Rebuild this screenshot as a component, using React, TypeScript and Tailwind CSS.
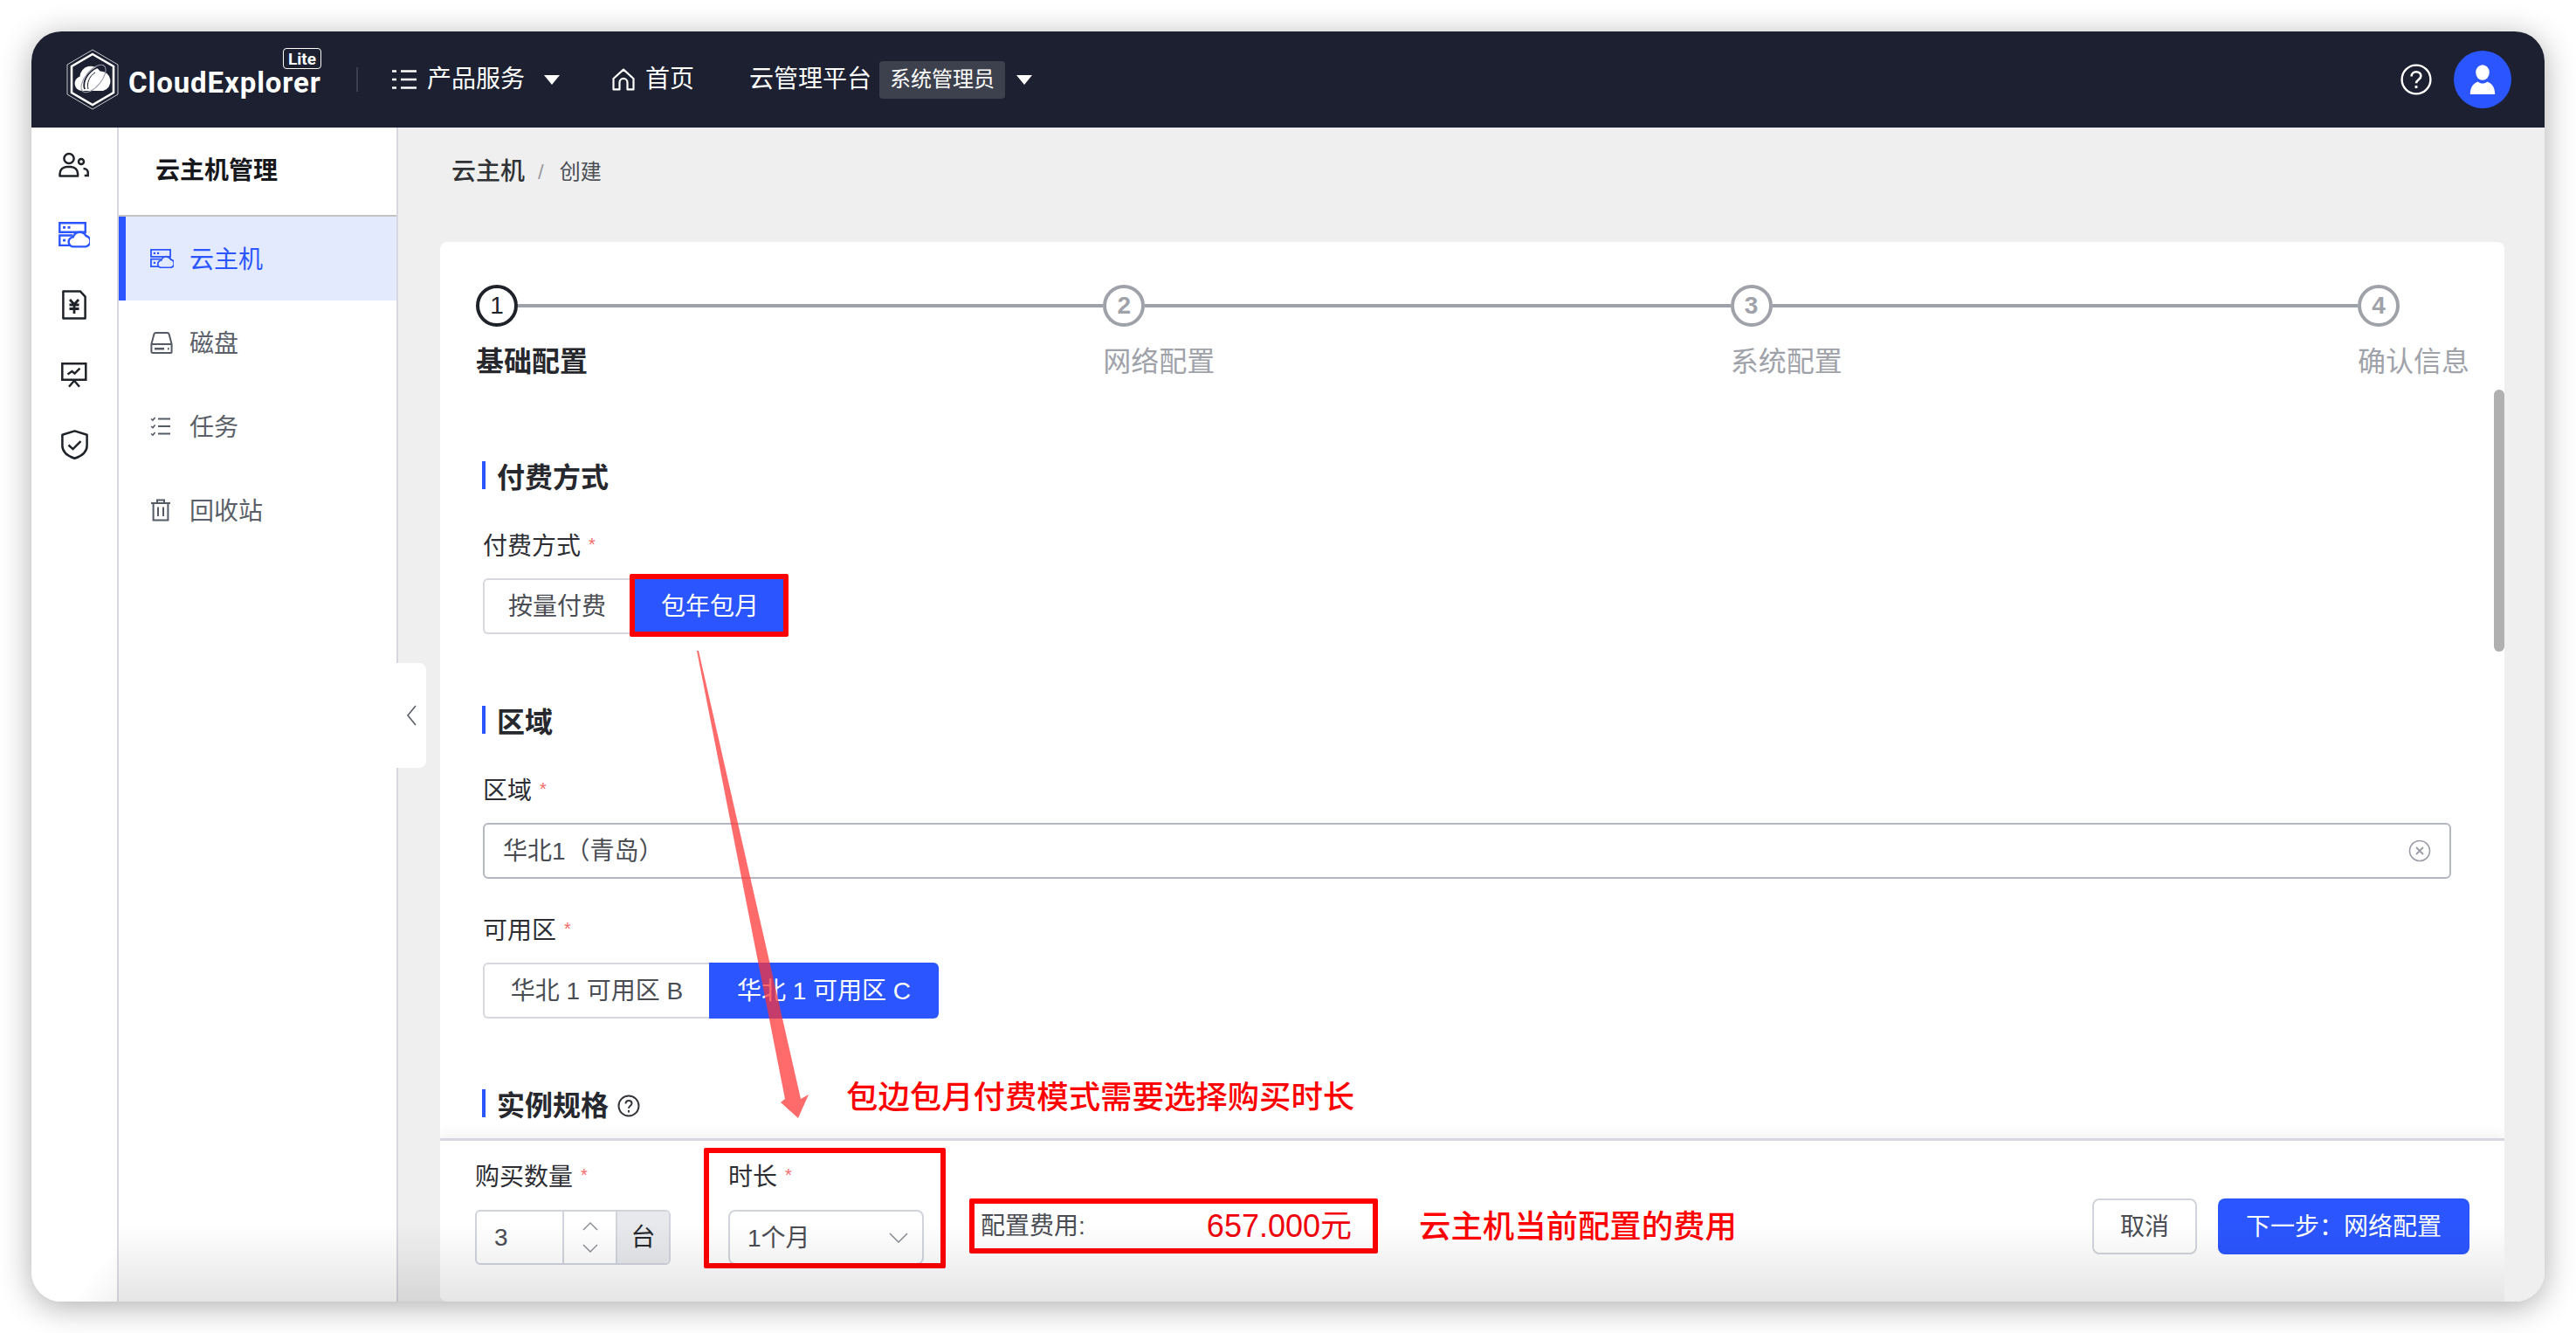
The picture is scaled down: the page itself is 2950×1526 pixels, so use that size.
import React from "react";

const FONT = '"Liberation Sans","Noto Sans CJK SC",sans-serif';

function Logo() {
  return (
    <svg width="60" height="70" viewBox="0 0 60 70" className="shrink-0">
      <polygon points="30,1 59,18 59,52 30,69 1,52 1,18" fill="none" stroke="#ffffff" strokeWidth="1" opacity="0.75" />
      <polygon points="30,6 54,20 54,50 30,64 6,50 6,20" fill="none" stroke="#ffffff" strokeWidth="2.6" />
      <path d="M18 48a8.500 8.500 0 0 1-2.500-16.600a12.500 12.500 0 0 1 23-6a11.500 11.500 0 0 1 3.500 22.600z" fill="#ffffff" />
      <path d="M21 46C18 38 24 26 36 21" fill="none" stroke="#1c2030" strokeWidth="1.800" />
      <path d="M25 46C23 40 26 31 33 27" fill="none" stroke="#1c2030" strokeWidth="1" />
      <ellipse cx="31" cy="34" rx="9" ry="19" transform="rotate(40 31 34)" fill="none" stroke="#9a9ca6" strokeWidth="1.100" />
    </svg>
  );
}

function ServerCloud({ size, color, fill }: { size: number; color: string; fill: string }) {
  return (
    <svg width={size} height={size * 0.83} viewBox="0 0 36 30" fill="none" stroke={color} strokeWidth="2.400">
      <path d="M1.200 1.200h29.600v10.600H1.200z" />
      <path d="M14 27H1.200V15.500H16" />
      <path d="M5 6.500h3M10.500 6.500h3M5 21.200h3" strokeWidth="2.800" />
      <path d="M17.500 28.500a5.500 5.500 0 0 1-.8-11a8 8 0 0 1 14.800-1.400a6.300 6.300 0 0 1-.5 12.400z" fill={fill} />
    </svg>
  );
}

function Users() {
  return (
    <svg width="36" height="30" viewBox="0 0 36 30" fill="none" stroke="#1f2329" strokeWidth="2.500">
      <circle cx="12" cy="7.500" r="5.600" />
      <path d="M1.500 27.500v-2.600c0-4.600 3.800-8 8-8h4.600c4.400 0 8 3.400 8 8v2.600z" strokeLinejoin="round" />
      <circle cx="26" cy="11" r="3" />
      <path d="M28.500 19c3.400 0 5.200 2.200 5.200 4.600v3.400h-4" />
    </svg>
  );
}

function DocYen() {
  return (
    <svg width="28" height="34" viewBox="0 0 28 34" fill="none" stroke="#1f2329" strokeWidth="2.500">
      <path d="M1.400 1.400h19.400l5.800 6.200v25H1.400z" strokeLinejoin="round" />
      <path d="M9 11l5 5.400L19 11M8.500 17h11M8.500 21.500h11M14 16.400V27" strokeWidth="2.800" />
    </svg>
  );
}

function Board() {
  return (
    <svg width="30" height="29" viewBox="0 0 30 29" fill="none" stroke="#1f2329" strokeWidth="2.500">
      <path d="M1.300 1.300h27v18.400h-27z" />
      <path d="M7.500 13.500l5-3.500 3 2.600 6-6" />
      <path d="M9 27.800l6-7 6 7" />
    </svg>
  );
}

function Shield() {
  return (
    <svg width="31" height="34" viewBox="0 0 31 34" fill="none" stroke="#1f2329" strokeWidth="2.500">
      <path d="M15.500 1.400L29.600 5.800v12.400c0 7.400-6 11.800-14.100 14.600C7.400 30 1.400 25.600 1.400 18.200V5.800z" strokeLinejoin="round" />
      <path d="M8.500 17.500l5 4.600 9-9" />
    </svg>
  );
}

function Disk() {
  return (
    <svg width="26" height="25" viewBox="0 0 26 25" fill="none" stroke="#555b66" strokeWidth="2">
      <path d="M1.400 14L4.400 2.600C4.700 1.600 5.400 1 6.400 1h13.200c1 0 1.700.6 2 1.600L24.600 14v8.400c0 .9-.7 1.600-1.600 1.600H3c-.9 0-1.600-.7-1.600-1.600z" />
      <path d="M1.400 14h23.200" />
      <path d="M5 19.200h11M20 19.200h1.600" strokeWidth="2.400" />
    </svg>
  );
}

function Tasks() {
  return (
    <svg width="24" height="24" viewBox="0 0 24 24" fill="none" stroke="#555b66" strokeWidth="2">
      <path d="M9 3.500h14M9 12h14M9 20.500h14" />
      <path d="M1 3.500l2 1.600L5.600 2M1 12l2 1.600 2.600-3.100M1 20.500l2 1.600 2.600-3.100" strokeWidth="1.600" />
    </svg>
  );
}

function Trash() {
  return (
    <svg width="24" height="26" viewBox="0 0 24 26" fill="none" stroke="#555b66" strokeWidth="2">
      <path d="M1 5h22M8 5V1.400h8V5" />
      <path d="M3.600 5v19.600h16.800V5" />
      <path d="M9 9.500v10.500M15 9.500v10.500" />
    </svg>
  );
}

function Req() {
  return <span className="ml-[9px] text-[20px] leading-none text-[#f56c6c] relative -top-[3px]">*</span>;
}

function SectionTitle({ children }: { children: React.ReactNode }) {
  return (
    <div className="flex items-center gap-[13px] h-[32px] text-[32px] leading-[32px] font-semibold text-[#26282d]">
      <span className="w-[4px] h-[32px] bg-[#2b56ff]" />
      <span className="relative top-[3px] flex items-center gap-[10px]">{children}</span>
    </div>
  );
}

function Label({ children }: { children: React.ReactNode }) {
  return (
    <div className="relative top-[3px] flex items-center h-[28px] text-[28px] leading-[28px] text-[#2c2e33]">
      {children}
      <Req />
    </div>
  );
}

function Step({ n, label, active, last }: { n: number; label: string; active?: boolean; last?: boolean }) {
  return (
    <div className={last ? "w-[126px] shrink-0" : "flex-1"}>
      <div className="flex items-center">
        <div
          className={
            active
              ? "w-[48px] h-[48px] shrink-0 rounded-full border-[4px] border-[#1f2329] flex items-center justify-center text-[28px] font-medium text-[#1f2329]"
              : "w-[48px] h-[48px] shrink-0 rounded-full border-[4px] border-[#a0a2aa] flex items-center justify-center text-[28px] font-bold text-[#a0a2aa]"
          }
        >
          {n}
        </div>
        {!last && <div className="flex-1 h-[4px] bg-[#9ea1a9]" />}
      </div>
      <div
        className={
          active
            ? "mt-[18px] h-[42px] text-[32px] leading-[44px] font-semibold text-[#26282d] whitespace-nowrap"
            : "mt-[18px] h-[42px] text-[32px] leading-[44px] text-[#a0a2aa] whitespace-nowrap"
        }
      >
        {label}
      </div>
    </div>
  );
}

function NavItem({ icon, label, active }: { icon: React.ReactNode; label: string; active?: boolean }) {
  return (
    <div
      className={
        active
          ? "flex items-center h-[96px] bg-[#e4eafd] border-l-[8px] border-[#2b56ff] text-[#2b56ff] text-[28px]"
          : "flex items-center h-[96px] border-l-[8px] border-transparent text-[#5a5f69] text-[28px]"
      }
    >
      <span className="w-[73px] pl-[28px] flex items-center shrink-0">{icon}</span>
      <span className="pt-[3px]">{label}</span>
    </div>
  );
}

export default function App() {
  return (
    <div className="relative w-[2950px] h-[1526px] bg-white p-[36px] overflow-hidden" style={{ fontFamily: FONT }}>
      <div className="relative w-[2878px] h-[1454px] rounded-[34px] overflow-hidden flex flex-col bg-white shadow-[0_6px_36px_rgba(0,0,0,0.32)]">
        {/* top bar */}
        <header className="h-[110px] shrink-0 bg-[#1c2030] flex items-center text-white pl-[40px] pr-[38px]">
          <Logo />
          <div className="relative ml-[11px] w-[220px] h-[70px] flex items-center pt-[6px]">
            <span className="text-[33px] leading-none font-bold tracking-[0.9px] whitespace-nowrap" style={{ fontFamily: '"Roboto",sans-serif' }}>
              CloudExplorer
            </span>
            <span
              className="absolute -top-[1px] -right-[1px] w-[44px] h-[24px] rounded-[4px] border border-white flex items-center justify-center text-[19px] leading-none font-bold"
              style={{ fontFamily: '"Roboto",sans-serif' }}
            >
              Lite
            </span>
          </div>
          <div className="ml-[41px] w-[2px] h-[28px] bg-[#3a3f4e]" />
          <svg className="ml-[39px] shrink-0" width="28" height="24" viewBox="0 0 28 24" fill="none" stroke="#fff" strokeWidth="2.400">
            <path d="M0 2.500h5M10 2.500h18M0 12h5M10 12h18M0 21.500h5M10 21.500h18" />
          </svg>
          <span className="ml-[12px] text-[28px] leading-none">产品服务</span>
          <svg className="ml-[22px] shrink-0" width="18" height="11" viewBox="0 0 18 11"><path d="M0 0h18L9 11z" fill="#fff" /></svg>
          <svg className="ml-[60px] shrink-0" width="26" height="26" viewBox="0 0 26 26" fill="none" stroke="#fff" strokeWidth="2.200" strokeLinejoin="round">
            <path d="M1.500 12L13 1.600 24.500 12v12.400H17.500v-8a4.500 4.500 0 0 0-9 0v8H1.500z" />
          </svg>
          <span className="ml-[12px] text-[28px] leading-none">首页</span>
          <span className="ml-[63px] text-[28px] leading-none">云管理平台</span>
          <span className="ml-[9px] w-[144px] h-[43px] rounded-[4px] bg-[#3d414e] flex items-center justify-center text-[24px] leading-none">系统管理员</span>
          <svg className="ml-[13px] shrink-0" width="18" height="11" viewBox="0 0 18 11"><path d="M0 0h18L9 11z" fill="#fff" /></svg>
          <svg className="ml-auto shrink-0" width="36" height="36" viewBox="0 0 36 36" fill="none" stroke="#fff">
            <circle cx="18" cy="18" r="16.400" strokeWidth="2.400" />
            <path d="M12.600 14.400c0-3.200 2.400-5.200 5.400-5.200s5.400 2 5.400 4.800c0 4-5.400 4.400-5.400 8.200" strokeWidth="2.600" />
            <path d="M18 25v3" strokeWidth="2.800" />
          </svg>
          <div className="ml-[25px] w-[66px] h-[66px] rounded-full bg-[#2b56ff] flex items-center justify-center">
            <svg width="30" height="34" viewBox="0 0 30 34" fill="#fff">
              <ellipse cx="15" cy="9" rx="7.800" ry="8.800" />
              <path d="M0.800 34c0-7 2.500-12.600 9-14.600 1.500 1.400 3.200 2 5.200 2s3.700-.6 5.200-2c6.500 2 9 7.600 9 14.600z" />
            </svg>
          </div>
        </header>

        <div className="flex-1 flex min-h-0">
          {/* icon rail */}
          <aside className="w-[100px] shrink-0 border-r-2 border-[#d6d7df] bg-white flex flex-col items-center pt-[3px]">
            {[<Users key="a" />, <ServerCloud key="b" size={36} color="#2b56ff" fill="#ffffff" />, <DocYen key="c" />, <Board key="d" />, <Shield key="e" />].map((ic, i) => (
              <div key={i} className="h-[80px] w-full shrink-0 flex items-center justify-center">
                {ic}
              </div>
            ))}
          </aside>

          {/* secondary nav */}
          <nav className="relative w-[320px] shrink-0 border-r-2 border-[#d6d7df] bg-white">
            <div className="h-[102px] border-b-2 border-[#c4c4c4] pl-[42px] flex items-center text-[28px] font-semibold text-[#17181c]">云主机管理</div>
            <NavItem active icon={<ServerCloud size={27} color="#2b56ff" fill="#e4eafd" />} label="云主机" />
            <NavItem icon={<Disk />} label="磁盘" />
            <NavItem icon={<Tasks />} label="任务" />
            <NavItem icon={<Trash />} label="回收站" />
            <div className="absolute left-[318px] top-[613px] w-[34px] h-[120px] bg-white rounded-r-[8px] flex items-center justify-center z-10">
              <svg width="12" height="24" viewBox="0 0 12 24" fill="none" stroke="#5a5f69" strokeWidth="1.600"><path d="M11 1L2 12l9 11" /></svg>
            </div>
          </nav>

          {/* main */}
          <main className="flex-1 min-w-0 flex flex-col bg-[#efefef] pl-[48px] pr-[46px]">
            <div className="h-[131px] shrink-0 pt-[37px] pl-[13px] flex items-start text-[#303236]">
              <span className="text-[28px] leading-[28px] font-medium">云主机</span>
              <span className="ml-[15px] text-[24px] leading-[28px] text-[#9a9ca3]">/</span>
              <span className="ml-[18px] text-[24px] leading-[28px] text-[#4b4e55]">创建</span>
            </div>

            <section className="relative flex-1 min-h-0 bg-white rounded-t-[8px] rounded-bl-[8px] overflow-hidden flex flex-col">
              <div className="relative flex-1 min-h-0 overflow-hidden">
                <div className="absolute right-0 top-[169px] w-[12px] h-[300px] rounded-full bg-[#b0b0b0]" />
                <div className="flex pl-[41px] pr-[42px] pt-[49px]">
                  <Step n={1} label="基础配置" active />
                  <Step n={2} label="网络配置" />
                  <Step n={3} label="系统配置" />
                  <Step n={4} label="确认信息" last />
                </div>

                <div className="pl-[48px] pr-[61px]">
                  <div className="mt-[94px]"><SectionTitle>付费方式</SectionTitle></div>
                  <div className="mt-[49px] ml-[1px]"><Label>付费方式</Label></div>
                  <div className="mt-[25px] ml-[1px] flex h-[64px] text-[28px]">
                    <div className="w-[168px] pt-[2px] border-2 border-r-0 border-[#d6d7df] rounded-l-[6px] flex items-center justify-center text-[#4a4d54]">按量付费</div>
                    <div className="relative w-[182px] pt-[2px] pl-[2px] bg-[#2b56ff] text-white flex items-center justify-center">
                      包年包月
                      <div className="absolute left-0 right-0 -top-[5px] -bottom-[3px] border-[6px] border-[#ff0000] rounded-[2px]" />
                    </div>
                  </div>

                  <div className="mt-[82px]"><SectionTitle>区域</SectionTitle></div>
                  <div className="mt-[49px] ml-[1px]"><Label>区域</Label></div>
                  <div className="mt-[25px] ml-[1px] h-[64px] border-2 border-[#b4b6c0] rounded-[6px] flex items-center pl-[21px] pr-[21px] text-[28px] text-[#4a4d54] justify-between">
                    <span className="pt-[2px]">华北1（青岛）</span>
                    <svg width="26" height="26" viewBox="0 0 26 26" fill="none" stroke="#9a9ca6" strokeWidth="1.600">
                      <circle cx="13" cy="13" r="11.500" />
                      <path d="M9 9l8 8M17 9l-8 8" strokeWidth="1.800" />
                    </svg>
                  </div>

                  <div className="mt-[43px] ml-[1px]"><Label>可用区</Label></div>
                  <div className="mt-[25px] ml-[1px] flex h-[64px] text-[28px]">
                    <div className="w-[259px] pt-[2px] border-2 border-r-0 border-[#d6d7df] rounded-l-[6px] flex items-center justify-center text-[#4a4d54]">华北 1 可用区 B</div>
                    <div className="w-[263px] pt-[2px] bg-[#2b56ff] text-white rounded-r-[6px] flex items-center justify-center">华北 1 可用区 C</div>
                  </div>

                  <div className="mt-[81px]">
                    <SectionTitle>
                      实例规格
                      <svg width="26" height="26" viewBox="0 0 26 26" fill="none" stroke="#33353a" strokeWidth="2">
                        <circle cx="13" cy="13" r="11.500" />
                        <path d="M9.500 10.500c0-2.200 1.600-3.500 3.500-3.500s3.500 1.300 3.500 3.200c0 2.700-3.500 3-3.500 5.500" />
                        <path d="M13 18v2.500" />
                      </svg>
                    </SectionTitle>
                  </div>
                </div>
              </div>

              {/* footer */}
              <div className="h-[187px] shrink-0 bg-white border-t-[3px] border-[#d6d7e0] shadow-[0_-6px_12px_rgba(0,0,0,0.05)] flex items-start pl-[40px] pr-[40px] pt-[25px]">
                <div className="w-[224px] shrink-0">
                  <Label>购买数量</Label>
                  <div className="mt-[26px] h-[63px] flex border-2 border-[#d2d4dd] rounded-[6px] overflow-hidden text-[28px] text-[#4a4d54]">
                    <div className="w-[98px] pl-[20px] flex items-center">3</div>
                    <div className="w-[63px] border-x-2 border-[#d2d4dd] flex flex-col items-center justify-center gap-[15px]">
                      <svg width="18" height="10" viewBox="0 0 18 10" fill="none" stroke="#8a8c94" strokeWidth="1.400"><path d="M1 9l8-8 8 8" /></svg>
                      <svg width="18" height="10" viewBox="0 0 18 10" fill="none" stroke="#8a8c94" strokeWidth="1.400"><path d="M1 1l8 8 8-8" /></svg>
                    </div>
                    <div className="flex-1 bg-[#e8e9ec] flex items-center justify-center text-[#26282d]">台</div>
                  </div>
                </div>

                <div className="relative ml-[66px] w-[224px] shrink-0">
                  <Label>时长</Label>
                  <div className="mt-[26px] h-[63px] flex items-center justify-between border-2 border-[#d2d4dd] rounded-[8px] pl-[20px] pr-[16px] text-[28px] text-[#4a4d54]">
                    <span className="pt-[2px]">1个月</span>
                    <svg width="22" height="12" viewBox="0 0 22 12" fill="none" stroke="#8a8c94" strokeWidth="1.500"><path d="M1 1l10 10L21 1" /></svg>
                  </div>
                  <div className="absolute -left-[28px] -right-[25px] -top-[17px] -bottom-[4px] border-[6px] border-[#ff0000] rounded-[2px]" />
                </div>

                <div className="ml-[52px] mt-[41px] w-[468px] h-[63px] shrink-0 border-[6px] border-[#ff0000] rounded-[2px] flex items-center justify-between pl-[7px] pr-[24px]">
                  <span className="text-[28px] text-[#4a4d54] pt-[1px]">配置费用:</span>
                  <span className="text-[36px] text-[#f0000a]">657.000元</span>
                </div>

                <div className="ml-[47px] mt-[41px] h-[63px] pt-[3px] flex items-center text-[36.4px] font-medium text-[#ff0000] whitespace-nowrap">云主机当前配置的费用</div>

                <div className="ml-auto mt-[41px] flex gap-[24px] text-[28px]">
                  <div className="w-[120px] h-[64px] pt-[2px] border-2 border-[#d2d4dd] rounded-[8px] flex items-center justify-center text-[#4a4d54]">取消</div>
                  <div className="w-[288px] h-[64px] pt-[2px] bg-[#2b56ff] rounded-[8px] flex items-center justify-center text-white whitespace-nowrap">下一步：网络配置</div>
                </div>
              </div>
            </section>
          </main>
        </div>

        {/* bottom vignette of the captured window */}
        <div className="absolute left-[100px] right-[46px] bottom-0 h-[90px] border-b border-black/10 bg-linear-to-t from-black/10 to-transparent pointer-events-none" />
        <div className="absolute left-[46px] bottom-0 w-[54px] h-[70px] bg-linear-to-br from-transparent via-transparent to-black/5 pointer-events-none" />
      </div>

      {/* annotations drawn over the page */}
      <div className="absolute left-[969px] top-[1235px] text-[36.4px] leading-[44px] font-medium text-[#ff0000] whitespace-nowrap">包边包月付费模式需要选择购买时长</div>
      <svg className="absolute left-0 top-0 pointer-events-none" width="2950" height="1526" viewBox="0 0 2950 1526">
        <path d="M798 745L800 745L917 1258L926 1253L914 1280L894 1262L899 1258Z" fill="#ff3232" fillOpacity="0.72" />
      </svg>
    </div>
  );
}
